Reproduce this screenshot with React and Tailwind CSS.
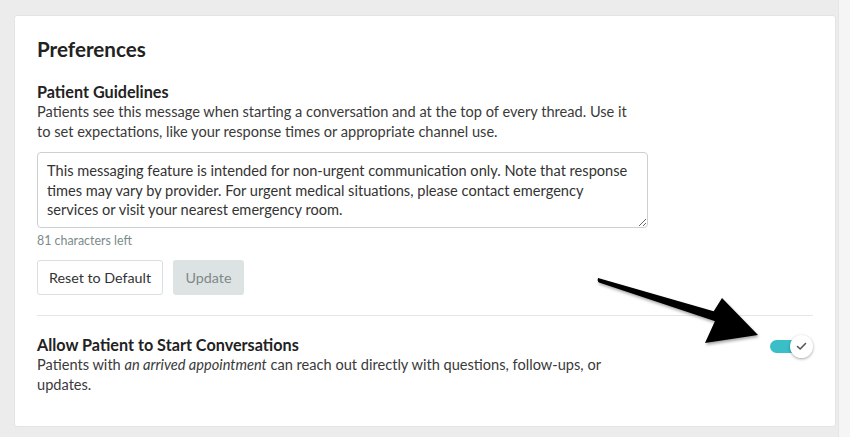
import React from "react";

export default function App() {
  return (
    <div
      className="flex h-[437px] w-[850px] overflow-hidden bg-[#ececec] text-[#333]"
      style={{ fontFamily: "Lato, 'Noto Sans', sans-serif" }}
    >
      <div className="relative flex-1 pl-[14px] pt-[15px] pr-[2px]">
        <div className="h-[412px] rounded-[3px] border border-[#e4e4e4] bg-white px-[22px] pt-[19px]">
          <h1 className="text-[20.6px] font-bold leading-[28px] text-[#222]">Preferences</h1>

          <h2 className="mt-[19px] text-[16.2px] font-bold leading-[20px] text-[#222]">Patient Guidelines</h2>
          <p className="text-[14.6px] leading-[19.5px] text-[#3a3a3a]">
            Patients see this message when starting a conversation and at the top of every thread. Use it
            <br />
            to set expectations, like your response times or appropriate channel use.
          </p>

          <textarea
            readOnly
            wrap="off"
            className="mt-[11px] block h-[76px] w-[611px] overflow-hidden rounded-[4px] border border-[#c9d1d1] px-[9px] pt-[8px] text-[14.6px] leading-[19.5px] text-[#333] outline-none"
            style={{ fontFamily: "Lato, 'Noto Sans', sans-serif" }}
            value={
              "This messaging feature is intended for non-urgent communication only. Note that response\ntimes may vary by provider. For urgent medical situations, please contact emergency\nservices or visit your nearest emergency room."
            }
          />

          <div className="mt-[5px] text-[12.4px] leading-[16px] text-[#7b8b8b]">81 characters left</div>

          <div className="mt-[11px] flex gap-[10px]">
            <button className="h-[35px] w-[126px] rounded-[3px] border border-[#d9dede] bg-white text-[14.3px] text-[#333]">
              Reset to Default
            </button>
            <button className="h-[35px] w-[71px] rounded-[3px] bg-[#dde3e3] text-[14.3px] text-[#7d8888]">
              Update
            </button>
          </div>

          <div className="mt-[20px] h-px bg-[#e3e6e6]" />

          <div className="mt-[19px] flex items-start justify-between">
            <div>
              <h2 className="text-[16.2px] font-bold leading-[20px] text-[#222]">Allow Patient to Start Conversations</h2>
              <p className="text-[14.6px] leading-[19.5px] text-[#3a3a3a]">
                Patients with <em>an arrived appointment</em> can reach out directly with questions, follow-ups, or
                <br />
                updates.
              </p>
            </div>
            <div className="relative mt-[0px] h-[23px] w-[43px]">
              <div className="absolute left-0 top-[5px] h-[13px] w-[34px] rounded-full bg-[#3abfc8]" />
              <div className="absolute right-0 top-0 flex h-[23px] w-[23px] items-center justify-center rounded-full bg-white shadow-[0_1px_3px_rgba(0,0,0,0.35)]">
                <svg width="11" height="9" viewBox="0 0 11 9">
                  <path d="M1.5 4.5 L4.2 7 L9.5 1.5" fill="none" stroke="#555" strokeWidth="1.6" strokeLinecap="round" strokeLinejoin="round" />
                </svg>
              </div>
            </div>
          </div>
        </div>

        <svg
          className="pointer-events-none absolute left-0 top-0"
          width="836"
          height="437"
          viewBox="0 0 836 437"
        >
          <defs>
            <filter id="sh" x="-10%" y="-10%" width="130%" height="130%">
              <feDropShadow dx="1" dy="2" stdDeviation="1.5" floodColor="#000" floodOpacity="0.35" />
            </filter>
          </defs>
          <g filter="url(#sh)">
            <path d="M598 278 Q597 281 599 282.5 L716 321.5 L718 312.5 Z" fill="#000" />
            <polygon points="722,298 758,335 705,343 715,321 712,314" fill="#000" />
          </g>
        </svg>
      </div>
      <div className="w-[12px] border-l border-[#e6e6e6] bg-[#f5f5f5]" />
    </div>
  );
}
